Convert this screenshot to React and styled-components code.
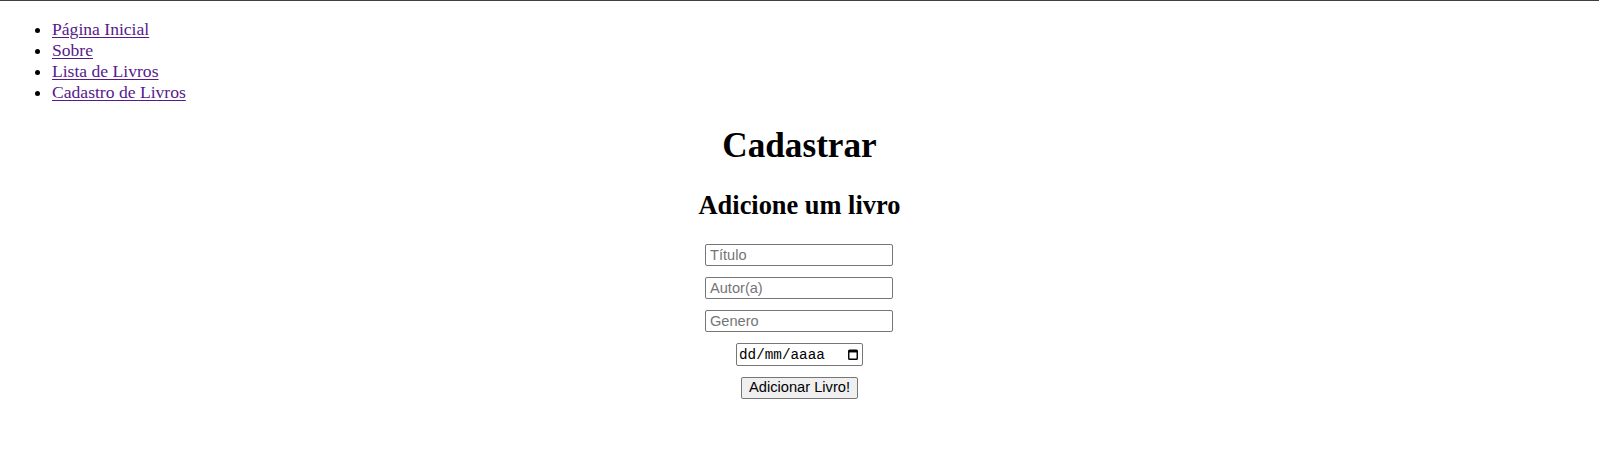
import React from 'react';
import styled, { createGlobalStyle } from 'styled-components';

const GlobalStyle = createGlobalStyle`
  html, body {
    margin: 0;
    padding: 0;
    background: #ffffff;
  }
  body {
    font-family: "Liberation Serif", "Times New Roman", serif;
    color: #000000;
  }
`;

const PageRoot = styled.div`
  border-top: 1px solid #3f3f3f;
  padding: 0 8.8px 40px;
  display: flex;
  flex-direction: column;
`;

const NavList = styled.ul`
  margin: 18.4px 0 0;
  padding-left: 43.2px;
  list-style: disc;
`;

const NavItem = styled.li`
  font-size: 17.6px;
  line-height: 20.7px;
`;

const NavLink = styled.a`
  color: #551a8b;
  text-decoration: underline;
  text-underline-offset: 2px;
`;

const Title = styled.h1`
  margin: 23.8px 0 0;
  font-size: 35.2px;
  line-height: 40.4px;
  font-weight: bold;
  text-align: center;
`;

const Subtitle = styled.h2`
  margin: 23.4px 0 0;
  font-size: 26.4px;
  line-height: 30.3px;
  font-weight: bold;
  text-align: center;
`;

const Form = styled.form`
  margin-top: 24px;
  display: flex;
  flex-direction: column;
  align-items: center;
  gap: 11px;
`;

const TextInput = styled.input`
  box-sizing: border-box;
  width: 188px;
  height: 22px;
  margin-right: 1px;
  padding: 1px 4px;
  border: 1px solid #767676;
  border-radius: 2px;
  font-family: "Liberation Sans", Arial, sans-serif;
  font-size: 14.6px;
  color: #000;
  background: #fff;
  outline: none;

  &::placeholder {
    color: #757575;
  }
`;

const DateField = styled.label`
  box-sizing: border-box;
  width: 127px;
  height: 23px;
  padding: 0 4px 0 2px;
  border: 1px solid #767676;
  border-radius: 2px;
  display: flex;
  align-items: center;
  justify-content: space-between;
  background: #fff;
`;

const DateText = styled.input`
  width: 92px;
  padding: 0;
  border: none;
  outline: none;
  background: transparent;
  font-family: "Liberation Mono", "DejaVu Sans Mono", monospace;
  font-size: 14.3px;
  color: #000;

  &::placeholder {
    color: #000;
  }
`;

const CalendarIcon = () => (
  <svg width="10" height="11" viewBox="0 0 10 11" aria-hidden="true">
    <rect x="0.75" y="1.25" width="8.5" height="9" rx="0.8" fill="none" stroke="#000" strokeWidth="1.4" />
    <rect x="0.75" y="1.25" width="8.5" height="2.2" fill="#000" />
  </svg>
);

const SubmitButton = styled.button`
  box-sizing: border-box;
  height: 21.5px;
  padding: 1px 7px;
  border: 1px solid #767676;
  border-radius: 2px;
  background: #efefef;
  font-family: "Liberation Sans", Arial, sans-serif;
  font-size: 14.67px;
  line-height: 17px;
  color: #000;
`;

const links = ['Página Inicial', 'Sobre', 'Lista de Livros', 'Cadastro de Livros'];

const App = () => {
  return (
    <PageRoot>
      <GlobalStyle />
      <NavList>
        {links.map((label) => (
          <NavItem key={label}>
            <NavLink href="#">{label}</NavLink>
          </NavItem>
        ))}
      </NavList>

      <Title>Cadastrar</Title>
      <Subtitle>Adicione um livro</Subtitle>

      <Form onSubmit={(e) => e.preventDefault()}>
        <TextInput type="text" placeholder="Título" />
        <TextInput type="text" placeholder="Autor(a)" />
        <TextInput type="text" placeholder="Genero" />
        <DateField>
          <DateText type="text" placeholder="dd/mm/aaaa" />
          <CalendarIcon />
        </DateField>
        <SubmitButton type="submit">Adicionar Livro!</SubmitButton>
      </Form>
    </PageRoot>
  );
};

export default App;
